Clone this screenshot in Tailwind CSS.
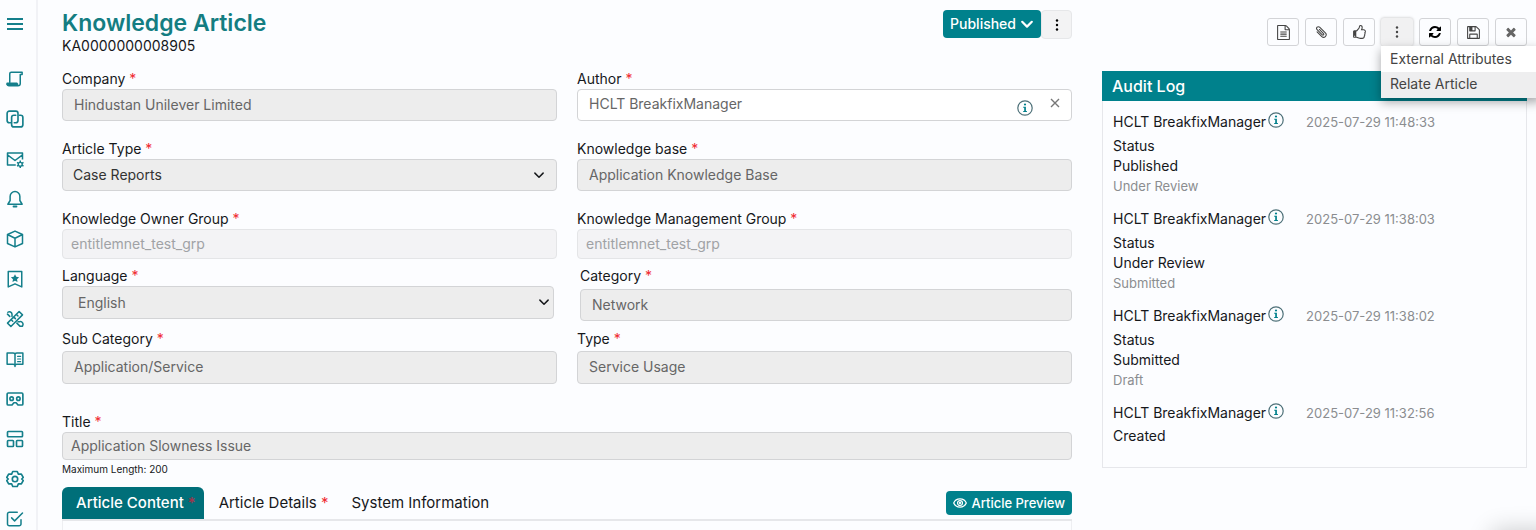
<!DOCTYPE html>
<html lang="en">
<head>
  <meta charset="UTF-8" />
  <meta name="viewport" content="width=device-width, initial-scale=1" />
  <title>Knowledge Article</title>
  <script src="https://cdn.jsdelivr.net/npm/@tailwindcss/browser@4"></script>
</head>
<body class="bg-[#fcfdff] font-['Inter',sans-serif] text-sm leading-5 text-[#16181b] overflow-hidden">
  <svg class="hidden">
    <symbol id="info" viewBox="0 0 16 16">
      <circle cx="8" cy="8" r="7.2" fill="none" stroke="#4d7078" stroke-width="1.2" />
      <circle cx="8" cy="4.5" r="1.1" fill="#00818c" />
      <path d="M6.2 6.7h2.7v4.2h1v1H6.2v-1h1V7.700h-1z" fill="#00818c" />
    </symbol>
    <symbol id="dots" viewBox="0 0 16 16">
      <circle cx="8" cy="2" r="1.600" /><circle cx="8" cy="8" r="1.600" /><circle cx="8" cy="14" r="1.600" />
    </symbol>
    <symbol id="chevron" viewBox="0 0 16 16">
      <path d="M2.5 5.5 8 11l5.500-5.500" fill="none" stroke="currentColor" stroke-linecap="round" stroke-linejoin="round" />
    </symbol>
  </svg>

  <div class="flex h-screen">
    <!-- Sidebar -->
    <nav class="w-[38px] shrink-0 border-r-2 border-[#f1f2f6] pr-1.5 text-[#147f8b] overflow-hidden" aria-label="Main">
      <button type="button" aria-label="Menu" class="flex h-12 mb-[11px] w-full items-center justify-center">
        <svg class="size-4" viewBox="0 0 16 16" fill="none" stroke="currentColor" stroke-width="2"><path d="M0 3h16M0 8h16M0 13h16" /></svg>
      </button>
      <div class="flex flex-col items-center">
        <a href="#" aria-label="Requests" class="flex h-10 items-center"><svg class="size-[18px]" viewBox="0 0 24 24" fill="none" stroke="currentColor" stroke-width="2" stroke-linejoin="round" stroke-linecap="round"><path d="M5 16V5a2 2 0 0 1 2-2h14.500v3H19v12a3 3 0 0 1-3 3H4a2.500 2.500 0 0 1-2.500-2.500V17.500h13V19a2 2 0 0 0 2 2" /><path d="M2 19h13" stroke-width="3" /></svg></a>
        <a href="#" aria-label="Copies" class="flex h-10 items-center"><svg class="size-[18px]" viewBox="0 0 24 24" fill="none" stroke="currentColor" stroke-width="2.200" stroke-linejoin="round" stroke-linecap="round"><path d="M6 17H4.500a3 3 0 0 1-3-3V4.500a3 3 0 0 1 3-3H13a3 3 0 0 1 3 3V14a3 3 0 0 1-3 3h-2" /><path d="M18 7h1.500a3 3 0 0 1 3 3v9.500a3 3 0 0 1-3 3H10.500a3 3 0 0 1-3-3V10a3 3 0 0 1 3-3H13" /></svg></a>
        <a href="#" aria-label="Mail settings" class="flex h-10 items-center"><svg class="size-[18px]" viewBox="0 0 24 24" fill="none" stroke="currentColor" stroke-width="2" stroke-linejoin="round"><path d="M13 20H2V4h20v8.500M2 6.500l10 7.500 10-7.500" /><circle cx="19" cy="19" r="2.600" stroke-width="1.800" /><path d="M19 14v2.400M19 21.600V24M14.700 16.500l2 1.200M21.300 20.300l2 1.200M14.700 21.500l2-1.200M21.300 17.700l2-1.200" /></svg></a>
        <a href="#" aria-label="Notifications" class="flex h-10 items-center"><svg class="size-[18px]" viewBox="0 0 24 24" fill="none" stroke="currentColor" stroke-width="2" stroke-linejoin="round" stroke-linecap="round"><path d="M12 2a6.500 6.500 0 0 0-6.500 6.500V14L2.500 19h19l-3-5V8.500A6.500 6.500 0 0 0 12 2z" /><path d="M10 22h4" stroke-width="2.400" /></svg></a>
        <a href="#" aria-label="Assets" class="flex h-10 items-center"><svg class="size-[18px]" viewBox="0 0 24 24" fill="none" stroke="currentColor" stroke-width="2" stroke-linejoin="round"><path d="M12 1.500 22 6v12l-10 4.500L2 18V6zM2 6l10 5 10-5M12 11v11.500" /></svg></a>
        <a href="#" aria-label="Bookmarks" class="flex h-10 items-center"><svg class="size-[18px]" viewBox="0 0 24 24" fill="none" stroke="currentColor" stroke-width="2" stroke-linejoin="round"><path d="M3 2h18v20.500l-9-4-9 4z" /><path d="m12 5.500 1.700 3.500 3.800.5-2.800 2.700.7 3.800L12 14.200 8.600 16l.7-3.800L6.500 9.500l3.800-.5z" fill="currentColor" stroke="none" /></svg></a>
        <a href="#" aria-label="Tools" class="flex h-10 items-center"><svg class="size-[18px]" viewBox="0 0 24 24" fill="none" stroke="currentColor" stroke-width="2" stroke-linejoin="round" stroke-linecap="round"><path d="m2 17.500 15.500-15.500 4.500 4.500-15.500 15.500zM14 6l2 2M10.500 9.500l2 2M7 13l2 2" /><path d="M8 8.500V5.500A3.500 3.500 0 0 0 2.500 3M2 5.500l3 3M16 15.500h2.500a3.500 3.500 0 0 1 3.500 5.500M14.500 17.500l4 4h3.500" /></svg></a>
        <a href="#" aria-label="Knowledge" class="flex h-10 items-center"><svg class="size-[18px]" viewBox="0 0 24 24" fill="none" stroke="currentColor" stroke-width="2" stroke-linejoin="round" stroke-linecap="round"><path d="M12 6c0-1.500-1-2-2.500-2H1.500v15h8c1.500 0 2.500.5 2.500 2 0-1.500 1-2 2.500-2h8V4h-8C13 4 12 4.500 12 6zM12 6v16" /><path d="M15.500 8.500h4M15.500 12h4M15.500 15.500h4" stroke-width="1.600" /></svg></a>
        <a href="#" aria-label="Recordings" class="flex h-10 items-center"><svg class="size-[18px]" viewBox="0 0 24 24" fill="none" stroke="currentColor" stroke-width="2.200" stroke-linejoin="round"><path d="M3 4h18a1.500 1.500 0 0 1 1.500 1.500v13A1.500 1.500 0 0 1 21 20h-5l-2.500-3h-3L8 20H3a1.500 1.500 0 0 1-1.500-1.500v-13A1.500 1.500 0 0 1 3 4z" /><circle cx="7.500" cy="11.500" r="2.300" /><circle cx="16.500" cy="11.500" r="2.300" /></svg></a>
        <a href="#" aria-label="Dashboards" class="flex h-10 items-center"><svg class="size-[18px]" viewBox="0 0 24 24" fill="none" stroke="currentColor" stroke-width="2.200"><rect x="2" y="2" width="20" height="7" rx="1" /><rect x="2" y="14" width="8" height="8" rx="1" /><rect x="14" y="14" width="8" height="8" rx="1" /></svg></a>
        <a href="#" aria-label="Settings" class="flex h-10 items-center"><svg class="size-[18px]" viewBox="0 0 24 24" fill="none" stroke="currentColor" stroke-width="2.200" stroke-linejoin="round"><path d="M9 2h6l1.500 3.500h4L23 10l-2 2 2 2-2.500 4.500h-4L15 22H9l-1.500-3.500h-4L1 14l2-2-2-2 2.500-4.500h4z" /><circle cx="12" cy="12" r="3.600" /></svg></a>
        <a href="#" aria-label="Approvals" class="flex h-10 items-center"><svg class="size-[18px]" viewBox="0 0 24 24" fill="none" stroke="currentColor" stroke-width="2" stroke-linejoin="round" stroke-linecap="round"><path d="M15 3H4.500A2.500 2.500 0 0 0 2 5.500v13A2.500 2.500 0 0 0 4.500 21h13a2.500 2.500 0 0 0 2.500-2.500V13M7.500 10.500l4 4L22 4" /></svg></a>
      </div>
    </nav>

    <!-- Article form -->
    <main class="flex-1 min-w-0 pl-6 pr-[30px] pt-2.5">
      <header class="flex items-start justify-between mb-3.5">
        <div>
          <h1 class="text-[23px] leading-[27px] font-semibold text-[#147d82]">Knowledge Article</h1>
          <p class="leading-[18px]">KA0000000008905</p>
        </div>
        <div class="flex items-start">
          <button type="button" class="flex h-7 items-center gap-1 rounded bg-[#00818c] px-[7px] font-medium text-white">Published
            <svg class="size-3.5" stroke-width="2.500"><use href="#chevron" /></svg>
          </button>
          <button type="button" aria-label="More actions" class="flex h-[29px] w-[31px] items-center justify-center rounded border border-[#e6e7e9] bg-[#f3f3f4]">
            <svg class="size-3"><use href="#dots" /></svg>
          </button>
        </div>
      </header>

      <form class="grid grid-cols-2 gap-x-5">
        <div class="mb-[18px]">
          <label for="company" class="block">Company <span class="text-[#f02b30]">*</span></label>
          <input id="company" type="text" readonly value="Hindustan Unilever Limited" class="block h-8 w-full rounded border border-[#d3d4d6] bg-[#ededed] px-[11px] pb-0.5 text-[#666]" />
        </div>
        <div class="mb-[18px]">
          <label for="author" class="block">Author <span class="text-[#f02b30]">*</span></label>
          <div class="flex h-8 items-center rounded border border-[#d3d4d6] bg-white pl-[11px] pr-2.5">
            <input id="author" type="text" value="HCLT BreakfixManager" class="min-w-0 flex-1 pb-0.5 text-[#666] outline-none" />
            <button type="button" aria-label="Author info" class="mt-1.5 mr-4"><svg class="size-4"><use href="#info" /></svg></button>
            <button type="button" aria-label="Clear author" class="mb-1"><svg class="size-3" viewBox="0 0 12 12" fill="none" stroke="#777" stroke-width="1.400"><path d="m2 2 8 8M10 2l-8 8" /></svg></button>
          </div>
        </div>

        <div class="mb-[18px]">
          <label for="article-type" class="block">Article Type <span class="text-[#f02b30]">*</span></label>
          <div class="relative">
            <select id="article-type" class="block h-8 w-full appearance-none rounded border border-[#d3d4d6] bg-[#ededed] px-2.5 text-[#333]"><option>Case Reports</option></select>
            <svg class="pointer-events-none absolute right-3 top-2.5 size-3" stroke-width="2"><use href="#chevron" /></svg>
          </div>
        </div>
        <div class="mb-[18px]">
          <label for="knowledge-base" class="block">Knowledge base <span class="text-[#f02b30]">*</span></label>
          <input id="knowledge-base" type="text" readonly value="Application Knowledge Base" class="block h-8 w-full rounded border border-[#d3d4d6] bg-[#ededed] px-[11px] pb-0.5 text-[#666]" />
        </div>

        <div class="mb-[7px]">
          <label for="owner-group" class="block">Knowledge Owner Group <span class="text-[#f02b30]">*</span></label>
          <input id="owner-group" type="text" readonly value="entitlemnet_test_grp" class="block h-[30px] w-full rounded border border-[#e4e5e7] bg-[#f3f3f5] px-2 pb-0.5 text-[#a0a2a5]" />
        </div>
        <div class="mb-[7px]">
          <label for="management-group" class="block">Knowledge Management Group <span class="text-[#f02b30]">*</span></label>
          <input id="management-group" type="text" readonly value="entitlemnet_test_grp" class="block h-[30px] w-full rounded border border-[#e4e5e7] bg-[#f3f3f5] px-2 pb-0.5 text-[#a0a2a5]" />
        </div>

        <div class="mb-2 pr-[3px]">
          <label for="language" class="block">Language <span class="text-[#f02b30]">*</span></label>
          <div class="relative">
            <select id="language" class="block h-[33px] w-full appearance-none rounded border border-[#d3d4d6] bg-[#ededed] px-[15px] text-[#666]"><option>English</option></select>
            <svg class="pointer-events-none absolute right-1 top-2.5 size-3" stroke-width="2"><use href="#chevron" /></svg>
          </div>
        </div>
        <div class="mb-2 pl-[3px]">
          <label for="category" class="mb-[3px] block">Category <span class="text-[#f02b30]">*</span></label>
          <input id="category" type="text" readonly value="Network" class="block h-8 w-full rounded border border-[#d3d4d6] bg-[#ededed] px-[11px] pb-0.5 text-[#666]" />
        </div>

        <div class="mb-7">
          <label for="sub-category" class="mb-0.5 block">Sub Category <span class="text-[#f02b30]">*</span></label>
          <input id="sub-category" type="text" readonly value="Application/Service" class="block h-[33px] w-full rounded border border-[#d3d4d6] bg-[#ededed] px-[11px] pb-0.5 text-[#666]" />
        </div>
        <div class="mb-7">
          <label for="type" class="mb-0.5 block">Type <span class="text-[#f02b30]">*</span></label>
          <input id="type" type="text" readonly value="Service Usage" class="block h-[33px] w-full rounded border border-[#d3d4d6] bg-[#ededed] px-[11px] pb-0.5 text-[#666]" />
        </div>

        <div class="col-span-2">
          <label for="title" class="block">Title <span class="text-[#f02b30]">*</span></label>
          <input id="title" type="text" readonly maxlength="200" value="Application Slowness Issue" class="block h-7 w-full rounded border border-[#d3d4d6] bg-[#ededed] px-2 pb-0.5 text-[#666]" />
          <p class="mt-px text-[10px] leading-4">Maximum Length: 200</p>
        </div>
      </form>

      <div class="mt-2.5 flex h-[34px] items-stretch border-b-2 border-[#e6e7ea] text-[15px]">
        <button type="button" class="rounded-t-md bg-[#006f79] pl-3.5 pr-2 font-medium text-white">Article Content <span class="text-[#a3344b]">*</span></button>
        <button type="button" class="px-[15px]">Article Details <span class="text-[#f02b30]">*</span></button>
        <button type="button" class="px-2">System Information</button>
        <button type="button" class="ml-auto mt-1 flex h-6 items-center gap-1 rounded-sm bg-[#00818c] px-[7px] text-[13px] font-medium text-white">
          <svg class="size-3.5" viewBox="0 0 16 16" fill="none" stroke="currentColor" stroke-width="1.400"><path d="M.8 8C3.500 1.800 12.500 1.800 15.200 8 12.500 14.200 3.500 14.200.8 8z" /><circle cx="8" cy="8" r="2.800" /><circle cx="8" cy="8" r=".6" /></svg>
          Article Preview
        </button>
      </div>
      <div class="h-4 border-x border-[#eeeff2]"></div>
    </main>

    <!-- Actions and audit log -->
    <aside class="w-[425px] shrink-0 mr-[9px] pt-[18px]">
      <div class="flex justify-end gap-1.5 mb-[25px] fill-[#444]">
        <button type="button" aria-label="Document" class="flex h-7 w-8 items-center justify-center rounded-[3px] border border-[#d3d4d7]">
          <svg class="size-[15px]" viewBox="0 0 1792 1792"><path d="M1596 380q28 28 48 76t20 88v1152q0 40-28 68t-68 28h-1344q-40 0-68-28t-28-68v-1600q0-40 28-68t68-28h896q40 0 88 20t76 48zm-444-244v376h376q-10-29-22-41l-313-313q-12-12-41-22zm384 1528v-1024h-416q-40 0-68-28t-28-68v-416h-768v1536h1280zm-1024-864q0-14 9-23t23-9h704q14 0 23 9t9 23v64q0 14-9 23t-23 9h-704q-14 0-23-9t-9-23v-64zm736 224q14 0 23 9t9 23v64q0 14-9 23t-23 9h-704q-14 0-23-9t-9-23v-64q0-14 9-23t23-9h704zm0 256q14 0 23 9t9 23v64q0 14-9 23t-23 9h-704q-14 0-23-9t-9-23v-64q0-14 9-23t23-9h704z" /></svg>
        </button>
        <button type="button" aria-label="Attachments" class="flex h-7 w-8 items-center justify-center rounded-[3px] border border-[#d3d4d7]">
          <svg class="size-3.5" viewBox="0 0 24 24" fill="none" stroke="#444" stroke-width="1.800" stroke-linecap="round"><path transform="rotate(-45 12 12)" d="M7.500 7v11.500a4.300 4.300 0 0 0 8.600 0V4.500a3 3 0 0 0-6 0V17a1.500 1.500 0 0 0 3 0V7" /></svg>
        </button>
        <button type="button" aria-label="Like" class="flex h-7 w-8 items-center justify-center rounded-[3px] border border-[#d3d4d7]">
          <svg class="size-[15px]" viewBox="0 0 1792 1792"><path d="M384 1344q0-26-19-45t-45-19-45 19-19 45 19 45 45 19 45-19 19-45zm1152-576q0-51-39-89.500t-89-38.500h-352q0-58 48-159.500t48-160.500q0-98-32-145t-128-47q-26 26-38 85t-30.500 125.500-59.500 109.500q-22 23-77 91-4 5-23 30t-31.500 41-34.500 42.500-40 44-38.500 35.500-40 27-35.500 9h-32v640h32q13 0 31.500 3t33 6.500 38 11 35 11.500 35.500 12.500 29 10.500q211 73 342 73h121q192 0 192-167 0-26-5-56 30-16 47.500-52.500t17.500-73.500-18-69q53-50 53-119 0-25-10-55.500t-25-47.500q32-1 53.500-47t21.500-81zm128-1q0 89-49 163 9 33 9 69 0 77-38 144 3 21 3 43 0 101-60 178 1 139-85 219.500t-227 80.500h-129q-96 0-189.500-22.500t-216.500-65.500q-116-40-138-40h-288q-53 0-90.500-37.500t-37.500-90.500v-640q0-53 37.500-90.500t90.500-37.500h274q36-24 137-155 58-75 107-128 24-25 35.500-85.500t30.500-126.500 62-108q39-37 90-37 84 0 151 32.500t102 101.500 35 186q0 93-48 192h176q104 0 180 76t76 179z" /></svg>
        </button>
        <div class="relative">
          <button type="button" aria-label="More options" aria-expanded="true" class="flex h-7 w-8 items-center justify-center rounded-[3px] bg-[#f1f1f2] shadow-[0_0_3px_#bbb]">
            <svg class="size-3"><use href="#dots" /></svg>
          </button>
          <div class="absolute left-0 top-7 z-10 w-40 bg-white text-[#444] shadow-[0_4px_10px_rgba(0,0,0,0.35)]">
            <a href="#" class="block px-[9px] py-[3px]">External Attributes</a>
            <a href="#" class="block bg-[#eeeeef] px-[9px] pt-0.5 pb-1">Relate Article</a>
          </div>
        </div>
        <button type="button" aria-label="Refresh" class="flex h-7 w-8 items-center justify-center rounded-[3px] border border-[#d3d4d7]">
          <svg class="size-3.5 fill-black" viewBox="0 0 1792 1792"><path d="M1639 1056q0 5-1 7-64 268-268 434.500t-478 166.500q-146 0-282.500-55t-243.500-157l-129 129q-19 19-45 19t-45-19-19-45v-448q0-26 19-45t45-19h448q26 0 45 19t19 45-19 45l-137 137q71 66 161 102t187 36q134 0 250-65t186-179q11-17 53-117 8-23 30-23h192q13 0 22.500 9.500t9.500 22.500zm25-800v448q0 26-19 45t-45 19h-448q-26 0-45-19t-19-45 19-45l138-138q-148-137-349-137-134 0-250 65t-186 179q-11 17-53 117-8 23-30 23h-199q-13 0-22.500-9.500t-9.500-22.500v-7q65-268 270-434.500t480-166.500q146 0 284 55.500t245 156.500l130-129q19-19 45-19t45 19 19 45z" /></svg>
        </button>
        <button type="button" aria-label="Save" class="flex h-7 w-8 items-center justify-center rounded-[3px] border border-[#d3d4d7]">
          <svg class="size-[15px]" viewBox="0 0 1792 1792"><path d="M512 1536h768v-384h-768v384zm896 0h128v-896q0-14-10-38.500t-20-34.500l-281-281q-10-10-34-20t-39-10v416q0 40-28 68t-68 28h-576q-40 0-68-28t-28-68v-416h-128v1280h128v-416q0-40 28-68t68-28h832q40 0 68 28t28 68v416zm-384-928v-320q0-13-9.500-22.500t-22.500-9.500h-192q-13 0-22.500 9.500t-9.500 22.500v320q0 13 9.500 22.500t22.500 9.500h192q13 0 22.500-9.500t9.500-22.500zm640 32v928q0 40-28 68t-68 28h-1344q-40 0-68-28t-28-68v-1344q0-40 28-68t68-28h928q40 0 88 20t76 48l280 280q28 28 48 76t20 88z" /></svg>
        </button>
        <button type="button" aria-label="Close" class="flex h-7 w-8 items-center justify-center rounded-[3px] border border-[#d3d4d7]">
          <svg class="size-3.5 fill-[#666]" viewBox="0 0 1792 1792"><path d="M1490 1322q0 40-28 68l-136 136q-28 28-68 28t-68-28l-294-294-294 294q-28 28-68 28t-68-28l-136-136q-28-28-28-68t28-68l294-294-294-294q-28-28-28-68t28-68l136-136q28-28 68-28t68 28l294 294 294-294q28-28 68-28t68 28l136 136q28 28 28 68t-28 68l-294 294 294 294q28 28 28 68z" /></svg>
        </button>
      </div>

      <section>
        <h2 class="bg-[#00818c] px-2.5 text-base leading-[30px] font-medium text-white">Audit Log</h2>
        <div class="flex flex-col gap-[13px] border border-t-0 border-[#e6e7eb] px-2.5 pt-[11px] pb-[21px]">
          <article>
            <div class="mb-[3px] flex items-start">
              <span>HCLT BreakfixManager</span>
              <button type="button" aria-label="User info" class="ml-0.5"><svg class="size-4"><use href="#info" /></svg></button>
              <time class="ml-[22px] text-[13px] text-[#8b8d90]">2025-07-29 11:48:33</time>
            </div>
            <p class="leading-[21px]">Status</p>
            <p>Published</p>
            <p class="text-[13px] text-[#8b8d90]">Under Review</p>
          </article>
          <article>
            <div class="mb-[3px] flex items-start">
              <span>HCLT BreakfixManager</span>
              <button type="button" aria-label="User info" class="ml-0.5"><svg class="size-4"><use href="#info" /></svg></button>
              <time class="ml-[22px] text-[13px] text-[#8b8d90]">2025-07-29 11:38:03</time>
            </div>
            <p class="leading-[21px]">Status</p>
            <p>Under Review</p>
            <p class="text-[13px] text-[#8b8d90]">Submitted</p>
          </article>
          <article>
            <div class="mb-[3px] flex items-start">
              <span>HCLT BreakfixManager</span>
              <button type="button" aria-label="User info" class="ml-0.5"><svg class="size-4"><use href="#info" /></svg></button>
              <time class="ml-[22px] text-[13px] text-[#8b8d90]">2025-07-29 11:38:02</time>
            </div>
            <p class="leading-[21px]">Status</p>
            <p>Submitted</p>
            <p class="text-[13px] text-[#8b8d90]">Draft</p>
          </article>
          <article>
            <div class="mb-[3px] flex items-start">
              <span>HCLT BreakfixManager</span>
              <button type="button" aria-label="User info" class="ml-0.5"><svg class="size-4"><use href="#info" /></svg></button>
              <time class="ml-[22px] text-[13px] text-[#8b8d90]">2025-07-29 11:32:56</time>
            </div>
            <p>Created</p>
          </article>
        </div>
      </section>
    </aside>
  </div>

  <!-- Soft shadow of the docked widget in the corner -->
  <div class="fixed -right-5 top-full h-10 w-16 shadow-[0_0_24px_rgba(0,0,0,0.2)]"></div>
</body>
</html>
